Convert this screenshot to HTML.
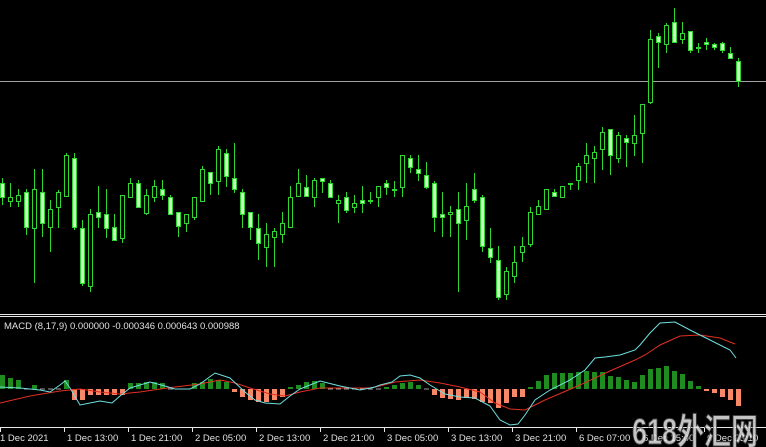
<!DOCTYPE html>
<html><head><meta charset="utf-8"><style>
html,body{margin:0;padding:0;background:#000;width:766px;height:447px;overflow:hidden}
svg{display:block}
text{font-family:"Liberation Sans",sans-serif;font-size:10px;fill:#e0e0e0}
</style></head><body>
<svg id="s" width="766" height="447" viewBox="0 0 766 447" xmlns="http://www.w3.org/2000/svg">
<rect width="766" height="447" fill="#000"/>
<line x1="0" y1="81.5" x2="766" y2="81.5" stroke="#a0a0a0" stroke-width="1"/>
<g id="c"></g>
<line x1="0" y1="314.5" x2="766" y2="314.5" stroke="#e8e8e8"/>
<line x1="0" y1="316.5" x2="766" y2="316.5" stroke="#e8e8e8"/>
<text x="4" y="329" style="font-size:9.5px">MACD  (8,17,9) 0.000000 -0.000346 0.000643 0.000988</text>
<g id="h"></g>
<polyline fill="none" stroke="#e03020" stroke-width="1" points="0,403 30,396 60,391 80,389 100,392 120,394 140,392 160,389 175,387 200,384 220,380 235,383 250,388 270,394 285,396 300,392 320,388 345,388 370,388 380,386 395,382 420,380 440,383 460,387 480,392 495,403 510,409 525,410 545,400 580,385 610,371 635,360 645,355 660,345 680,336 700,335 720,338 735,344"/>
<polyline fill="none" stroke="#70e0e0" stroke-width="1" points="0,387 20,388 40,390 50,392 60,385 65,381 70,388 80,405 90,403 100,401 112,403 120,396 130,388 150,382 165,386 175,389 190,389 200,384 215,373 230,378 245,392 255,400 265,403 280,404 290,396 300,389 320,381 340,386 360,390 375,387 380,385 392,382 400,376 410,375 420,378 430,385 445,394 460,397 475,398 490,406 500,420 510,425 518,424 525,415 535,400 550,390 570,380 585,370 595,358 605,357 620,355 635,350 640,345 650,333 660,323 675,322 690,330 710,340 730,350 736,358"/>
<line x1="0" y1="427.5" x2="766" y2="427.5" stroke="#e8e8e8"/>
<g id="t"></g>
<text x="632" y="444" textLength="126" lengthAdjust="spacingAndGlyphs" style="font-size:36px;font-weight:bold;fill:rgba(230,230,230,0.85);stroke:#444;stroke-width:1;font-family:'Liberation Sans','Noto Sans CJK SC',sans-serif">618外汇网</text>
</svg>
<script>
var NS="http://www.w3.org/2000/svg";
function el(p,n,a){var e=document.createElementNS(NS,n);for(var k in a)e.setAttribute(k,a[k]);p.appendChild(e);return e;}
var C=[[0,178,183,197,205,1],[8,183,197,201,207,0],[16,189,195,201,207,0],[24,189,192,227,235,1],[32,169,189,228,283,0],[40,169,192,223,237,1],[48,200,209,227,252,0],[56,190,192,207,228,0],[64,153,155,196,197,0],[72,153,158,227,230,1],[80,220,228,283,286,1],[88,209,214,286,292,0],[96,186,212,217,228,1],[104,189,214,228,238,1],[112,214,227,240,240,1],[120,195,195,238,243,0],[128,178,183,197,197,0],[136,180,183,207,207,1],[144,189,195,213,215,0],[152,180,186,197,202,0],[160,180,189,195,200,1],[168,195,197,214,215,1],[176,212,212,226,237,1],[184,214,214,223,232,0],[192,197,197,217,220,0],[200,166,169,201,201,0],[208,172,172,183,195,1],[216,146,149,181,195,0],[224,149,153,176,187,1],[232,143,178,189,193,1],[240,189,192,214,228,1],[248,212,212,227,240,1],[256,214,228,243,260,1],[264,223,234,247,267,0],[272,228,231,237,267,0],[280,212,223,234,243,0],[288,186,197,227,228,0],[296,169,183,196,197,0],[304,175,187,196,197,1],[312,178,180,197,207,0],[320,178,178,181,193,1],[328,180,183,197,197,1],[336,195,200,203,223,0],[344,192,197,210,213,1],[352,195,203,207,213,0],[360,186,200,203,213,1],[368,192,200,201,204,1],[376,186,186,197,207,0],[384,180,183,187,195,1],[392,181,189,189,197,1],[400,155,155,187,197,0],[408,155,158,167,173,1],[416,155,169,173,181,1],[424,162,175,187,189,1],[432,181,183,217,232,1],[440,192,214,217,237,1],[448,206,212,214,237,0],[456,192,209,223,292,1],[464,183,206,220,240,0],[472,173,189,200,203,1],[480,195,197,246,252,1],[488,228,248,257,263,1],[496,246,260,297,300,1],[504,267,271,294,300,0],[512,246,262,276,283,0],[520,237,246,252,262,0],[528,207,212,244,247,0],[536,200,206,214,215,0],[544,189,189,209,210,0],[552,189,192,196,197,1],[560,186,186,197,197,0],[568,183,183,184,190,1],[576,163,166,180,190,0],[584,143,155,163,183,0],[592,146,152,158,183,0],[600,127,132,149,170,0],[608,129,129,155,175,1],[616,132,135,158,163,0],[624,135,138,142,167,1],[632,115,135,143,156,0],[640,104,104,133,163,0],[648,30,39,102,104,0],[656,33,36,42,68,1],[664,23,25,44,53,0],[672,8,22,42,42,1],[680,22,33,39,44,0],[688,31,31,50,53,1],[696,43,47,48,53,1],[704,38,42,44,50,1],[712,43,44,47,50,1],[720,42,43,50,53,1],[728,47,53,58,58,1],[736,58,61,81,87,1]];
var g=document.getElementById("c"),G="#2ed82e";
C.forEach(function(c){var x=c[0]+2.5;
el(g,"line",{x1:x,y1:c[1],x2:x,y2:c[4],stroke:G,"stroke-width":1});
var h=Math.max(1,c[3]-c[2]);
el(g,"rect",{x:x-2,y:c[2]+0.5,width:4,height:h,fill:c[5]?"#c8f8c0":"#000",stroke:G,"stroke-width":1});});
var H={0:375,8:378,16:380,24:388,32:385,40:388,48:388,56:388,64:380,72:400,80:400,88:395,96:395,104:395,112:395,120:395,128:383,136:383,144:382,152:382,160:383,168:388,176:388,184:388,192:383,200:382,208:379,216:380,224:382,232:392,240:397,248:400,256:402,264:402,272:400,280:397,288:387,296:385,304:382,312:381,320:383,328:388,336:388,344:388,352:388,360:388,368:388,376:388,384:387,392:385,400:383,408:382,416:385,424:388,432:395,440:398,448:399,456:400,464:398,472:399,480:402,488:403,496:408,504:403,512:397,520:397,528:387,536:381,544:375,552:373,560:373,568:373,576:372,584:371,592:372,600:372,608:376,616:377,624:380,632:382,640:375,648:369,656:368,664:366,672:371,680:374,688:381,696:386,704:391,712:393,720:397,728:400,736:406};
var hg=document.getElementById("h"),Z=389;
for(var k in H){var v=H[k],x=+k;
if(Math.abs(v-Z)<2){el(hg,"line",{x1:x,y1:Z,x2:x+5,y2:Z,stroke:"#a0a0a0"});continue;}
el(hg,"rect",{x:x,y:Math.min(v,Z),width:5,height:Math.abs(v-Z),fill:v<Z?"#1e8c1e":"#f88868"});}
var T=[[0,"1 Dec 2021"],[64,"1 Dec 13:00"],[128,"1 Dec 21:00"],[192,"2 Dec 05:00"],[256,"2 Dec 13:00"],[320,"2 Dec 21:00"],[384,"3 Dec 05:00"],[448,"3 Dec 13:00"],[512,"3 Dec 21:00"],[576,"6 Dec 07:00"],[640,"6 Dec 15:00"],[704,"6 Dec 23:10"]];
var tg=document.getElementById("t");
T.forEach(function(t){el(tg,"line",{x1:t[0]+0.5,y1:427,x2:t[0]+0.5,y2:432,stroke:"#e8e8e8"});
var e=el(tg,"text",{x:t[0]+(t[0]?3:0),y:441,style:"font-size:9.5px"});e.textContent=t[1];});
</script>
</body></html>
